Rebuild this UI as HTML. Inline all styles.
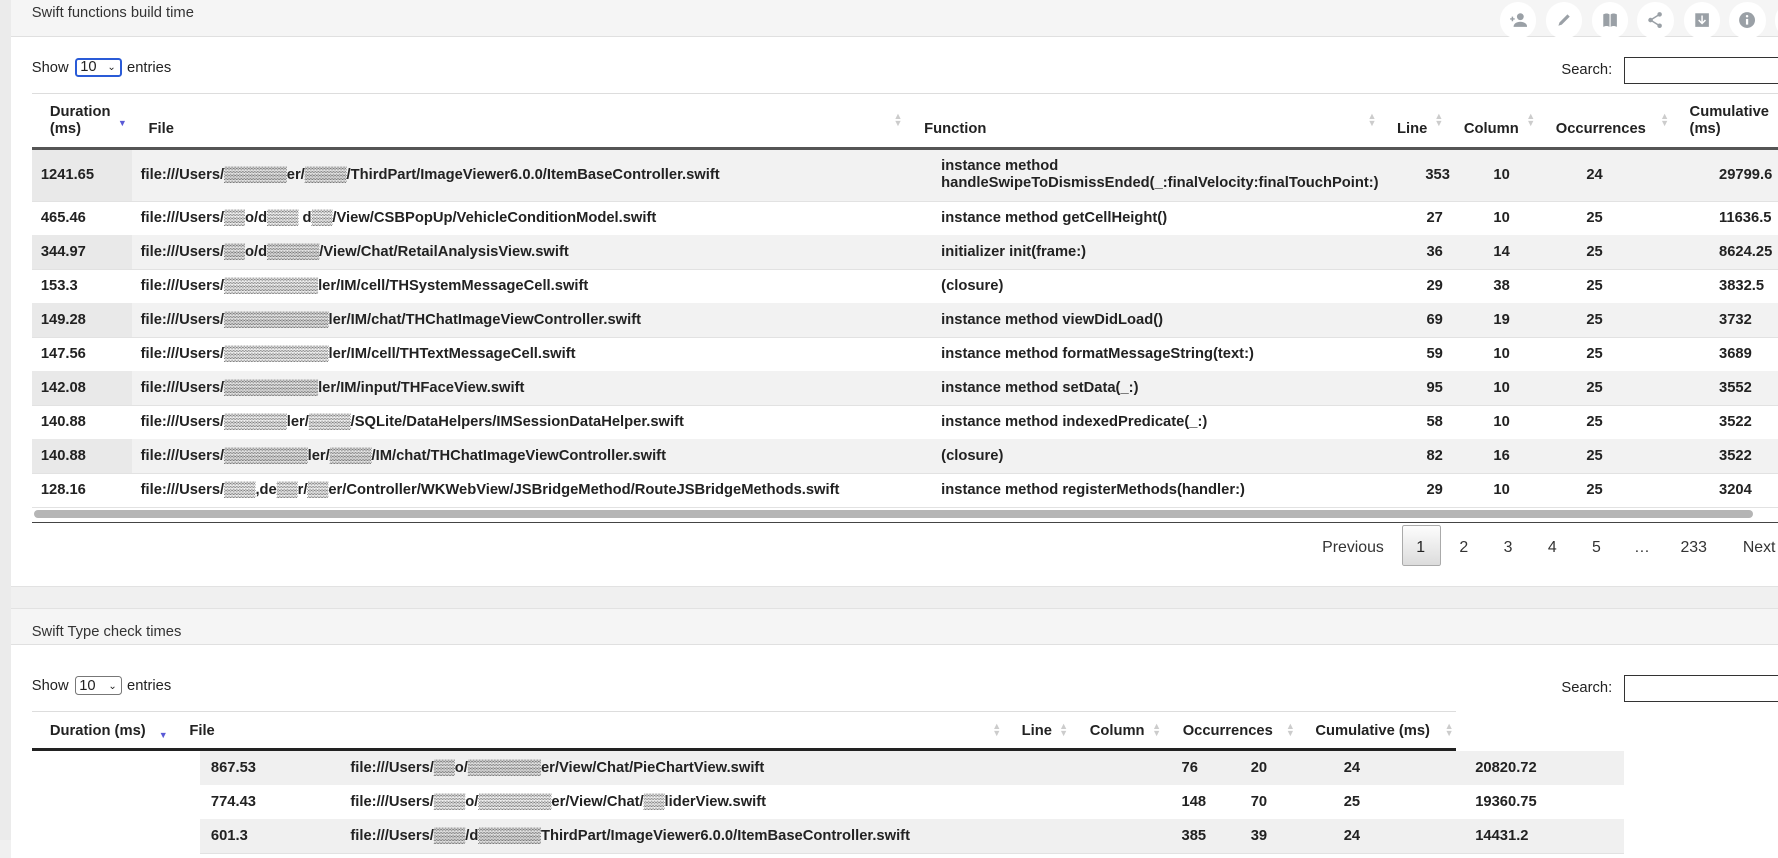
<!DOCTYPE html>
<html><head><meta charset="utf-8"><style>
html,body{margin:0;padding:0;}
body{width:1568px;height:741px;overflow:hidden;zoom:1.13393;background:#f0f0f0;font-family:"Liberation Sans",Arial,sans-serif;font-size:13px;color:#222;position:relative;}
.a{position:absolute;white-space:nowrap;}
.panel{position:absolute;left:10px;width:1580px;background:#fff;}
.hd{position:absolute;left:0;right:0;top:0;background:#f5f5f5;border-bottom:1px solid #e0e0e0;}
.b{font-weight:bold;}
.row{position:absolute;left:28px;width:1560px;height:30px;border-bottom:1px solid #e2e2e2;}
.row.g{background:#f2f2f2;}
.row.g .sc{background:#e9e9e9;}
.sc{position:absolute;left:0;top:0;bottom:0;width:88px;}
.row span{position:absolute;top:8px;font-weight:bold;white-space:nowrap;}
.sel{position:absolute;height:17px;border:1px solid #777;border-radius:3px;font-size:13px;line-height:17px;padding-left:3px;box-sizing:border-box;}
.ic{position:absolute;top:2px;width:32px;height:32px;border-radius:50%;background:#fff;}
.ic svg{position:absolute;left:8px;top:8px;}
.arr{position:absolute;width:6px;color:#ccc;font-size:7px;line-height:6px;}
.r2{position:absolute;left:176px;width:1256px;height:30px;border-bottom:1px solid #e2e2e2;}
.r2 span{position:absolute;top:8px;font-weight:bold;}
</style></head><body>
<div class="a" style="left:0;top:0;width:10px;height:741px;background:#ebebeb"></div>

<!-- panel 1 -->
<div class="panel" style="top:0;height:517px;border-bottom:1px solid #e2e2e2">
 <div class="hd" style="height:32px"></div>
 <div class="a" style="left:18px;top:4px;font-size:13px;color:#333">Swift functions build time</div>
</div>
<div class="ic" style="left:1323px"><svg width="16" height="16" viewBox="0 0 16 16"><circle cx="10" cy="5" r="3" fill="#9aa0a6"/><path d="M4 14c0-3 3-4.5 6-4.5s6 1.5 6 4.5z" fill="#9aa0a6"/><path d="M1 7h4M3 5v4" stroke="#9aa0a6" stroke-width="1.3"/></svg></div>
<div class="ic" style="left:1363px"><svg width="16" height="16" viewBox="0 0 16 16"><path d="M3 13l1-3 7-7 2 2-7 7z" fill="#9aa0a6"/></svg></div>
<div class="ic" style="left:1404px"><svg width="16" height="16" viewBox="0 0 16 16"><path d="M2 3c2-1 4-1 5.5 0v11C6 13 4 13 2 14zM14 3c-2-1-4-1-5.5 0v11c1.5-1 3.5-1 5.5 0z" fill="#9aa0a6"/></svg></div>
<div class="ic" style="left:1444px"><svg width="16" height="16" viewBox="0 0 16 16"><circle cx="12" cy="3" r="2" fill="#9aa0a6"/><circle cx="4" cy="8" r="2" fill="#9aa0a6"/><circle cx="12" cy="13" r="2" fill="#9aa0a6"/><path d="M12 3L4 8l8 5" stroke="#9aa0a6" stroke-width="1.3" fill="none"/></svg></div>
<div class="ic" style="left:1485px"><svg width="16" height="16" viewBox="0 0 16 16"><rect x="2" y="2" width="12" height="12" fill="#9aa0a6"/><path d="M8 4v6M5 8l3 3 3-3" stroke="#fff" stroke-width="1.3" fill="none"/></svg></div>
<div class="ic" style="left:1525px"><svg width="16" height="16" viewBox="0 0 16 16"><circle cx="8" cy="8" r="7" fill="#9aa0a6"/><rect x="7" y="7" width="2" height="5" fill="#fff"/><circle cx="8" cy="4.6" r="1.1" fill="#fff"/></svg></div>
<div class="ic" style="left:1565px"></div>

<div class="a" style="left:28px;top:53px">Show</div>
<div class="sel" style="left:66px;top:51px;width:42px;border:2px solid #2a5bd7;line-height:14px">10 <span style="position:absolute;right:4px;font-size:9px">&#8964;</span></div>
<div class="a" style="left:112px;top:53px">entries</div>
<div class="a" style="left:1377px;top:55px">Search:</div>
<div class="a" style="left:1432px;top:50px;width:150px;height:24px;border:1px solid #333;box-sizing:border-box"></div>

<div class="a" style="left:28px;top:82px;width:1560px;height:1px;background:#ddd"></div>
<div class="a b" style="left:44px;top:92px;line-height:15px">Duration<br>(ms)</div>
<div class="a" style="left:104px;top:104px;color:#5a5ad6;font-size:8px">&#9660;</div>
<div class="a b" style="left:131px;top:107px">File</div>
<div class="a b" style="left:815px;top:107px">Function</div>
<div class="a b" style="left:1232px;top:107px">Line</div>
<div class="a b" style="left:1291px;top:107px">Column</div>
<div class="a b" style="left:1372px;top:107px">Occurrences</div>
<div class="a b" style="left:1490px;top:92px;line-height:15px">Cumulative<br>(ms)</div>
<div class="a" style="left:788px;top:100px;color:#ccc;font-size:8px;line-height:6px">&#9650;<br>&#9660;</div>
<div class="a" style="left:1206px;top:100px;color:#ccc;font-size:8px;line-height:6px">&#9650;<br>&#9660;</div>
<div class="a" style="left:1265px;top:100px;color:#ccc;font-size:8px;line-height:6px">&#9650;<br>&#9660;</div>
<div class="a" style="left:1346px;top:100px;color:#ccc;font-size:8px;line-height:6px">&#9650;<br>&#9660;</div>
<div class="a" style="left:1464px;top:100px;color:#ccc;font-size:8px;line-height:6px">&#9650;<br>&#9660;</div>
<div class="a" style="left:28px;top:130px;width:1560px;height:2px;background:#555"></div>

<div class="row g" style="top:132px;height:45px"><div class="sc"></div>
<span style="left:8px;top:15px">1241.65</span><span style="left:96px;top:15px">file:///Users/▒▒▒▒▒▒er/▒▒▒▒/ThirdPart/ImageViewer6.0.0/ItemBaseController.swift</span>
<span style="left:802px;top:7px;line-height:15px">instance method<br>handleSwipeToDismissEnded(_:finalVelocity:finalTouchPoint:)</span><span style="left:1229px;top:15px">353</span><span style="left:1289px;top:15px">10</span><span style="left:1371px;top:15px">24</span><span style="left:1488px;top:15px">29799.6</span></div>
<div class="row" style="top:177px"><div class="sc"></div><span style="left:8px">465.46</span><span style="left:96px">file:///Users/▒▒o/d▒▒▒ d▒▒/View/CSBPopUp/VehicleConditionModel.swift</span><span style="left:802px">instance method getCellHeight()</span><span style="left:1230px">27</span><span style="left:1289px">10</span><span style="left:1371px">25</span><span style="left:1488px">11636.5</span></div>
<div class="row g" style="top:207px"><div class="sc"></div><span style="left:8px">344.97</span><span style="left:96px">file:///Users/▒▒o/d▒▒▒▒▒/View/Chat/RetailAnalysisView.swift</span><span style="left:802px">initializer init(frame:)</span><span style="left:1230px">36</span><span style="left:1289px">14</span><span style="left:1371px">25</span><span style="left:1488px">8624.25</span></div>
<div class="row" style="top:237px"><div class="sc"></div><span style="left:8px">153.3</span><span style="left:96px">file:///Users/▒▒▒▒▒▒▒▒▒ler/IM/cell/THSystemMessageCell.swift</span><span style="left:802px">(closure)</span><span style="left:1230px">29</span><span style="left:1289px">38</span><span style="left:1371px">25</span><span style="left:1488px">3832.5</span></div>
<div class="row g" style="top:267px"><div class="sc"></div><span style="left:8px">149.28</span><span style="left:96px">file:///Users/▒▒▒▒▒▒▒▒▒▒ler/IM/chat/THChatImageViewController.swift</span><span style="left:802px">instance method viewDidLoad()</span><span style="left:1230px">69</span><span style="left:1289px">19</span><span style="left:1371px">25</span><span style="left:1488px">3732</span></div>
<div class="row" style="top:297px"><div class="sc"></div><span style="left:8px">147.56</span><span style="left:96px">file:///Users/▒▒▒▒▒▒▒▒▒▒ler/IM/cell/THTextMessageCell.swift</span><span style="left:802px">instance method formatMessageString(text:)</span><span style="left:1230px">59</span><span style="left:1289px">10</span><span style="left:1371px">25</span><span style="left:1488px">3689</span></div>
<div class="row g" style="top:327px"><div class="sc"></div><span style="left:8px">142.08</span><span style="left:96px">file:///Users/▒▒▒▒▒▒▒▒▒ler/IM/input/THFaceView.swift</span><span style="left:802px">instance method setData(_:)</span><span style="left:1230px">95</span><span style="left:1289px">10</span><span style="left:1371px">25</span><span style="left:1488px">3552</span></div>
<div class="row" style="top:357px"><div class="sc"></div><span style="left:8px">140.88</span><span style="left:96px">file:///Users/▒▒▒▒▒▒ler/▒▒▒▒/SQLite/DataHelpers/IMSessionDataHelper.swift</span><span style="left:802px">instance method indexedPredicate(_:)</span><span style="left:1230px">58</span><span style="left:1289px">10</span><span style="left:1371px">25</span><span style="left:1488px">3522</span></div>
<div class="row g" style="top:387px"><div class="sc"></div><span style="left:8px">140.88</span><span style="left:96px">file:///Users/▒▒▒▒▒▒▒▒ler/▒▒▒▒/IM/chat/THChatImageViewController.swift</span><span style="left:802px">(closure)</span><span style="left:1230px">82</span><span style="left:1289px">16</span><span style="left:1371px">25</span><span style="left:1488px">3522</span></div>
<div class="row" style="top:417px"><div class="sc"></div><span style="left:8px">128.16</span><span style="left:96px">file:///Users/▒▒▒,de▒▒r/▒▒er/Controller/WKWebView/JSBridgeMethod/RouteJSBridgeMethods.swift</span><span style="left:802px">instance method registerMethods(handler:)</span><span style="left:1230px">29</span><span style="left:1289px">10</span><span style="left:1371px">25</span><span style="left:1488px">3204</span></div>

<div class="a" style="left:30px;top:450px;width:1516px;height:7px;border-radius:4px;background:#b5b5b5"></div>
<div class="a" style="left:28px;top:460px;width:1560px;height:1px;background:#444"></div>

<div class="a" style="left:1166px;top:475px;font-size:14px;color:#333">Previous</div>
<div class="a" style="left:1236px;top:463px;width:35px;height:36px;box-sizing:border-box;border:1px solid #aaa;border-radius:2px;background:linear-gradient(#fdfdfd,#dcdcdc)"></div>
<div class="a" style="left:1249px;top:475px;font-size:14px">1</div>
<div class="a" style="left:1287px;top:475px;font-size:14px;color:#333">2</div>
<div class="a" style="left:1326px;top:475px;font-size:14px;color:#333">3</div>
<div class="a" style="left:1365px;top:475px;font-size:14px;color:#333">4</div>
<div class="a" style="left:1404px;top:475px;font-size:14px;color:#333">5</div>
<div class="a" style="left:1441px;top:475px;font-size:14px;color:#333">…</div>
<div class="a" style="left:1482px;top:475px;font-size:14px;color:#333">233</div>
<div class="a" style="left:1537px;top:475px;font-size:14px;color:#333">Next</div>

<!-- panel 2 -->
<div class="panel" style="top:536px;height:220px;border-top:1px solid #e2e2e2">
 <div class="hd" style="height:31px"></div>
 <div class="a" style="left:18px;top:13px;color:#333">Swift Type check times</div>
</div>
<div class="a" style="left:28px;top:598px">Show</div>
<div class="sel" style="left:66px;top:596px;width:42px">10 <span style="position:absolute;right:4px;font-size:9px">&#8964;</span></div>
<div class="a" style="left:112px;top:598px">entries</div>
<div class="a" style="left:1377px;top:600px">Search:</div>
<div class="a" style="left:1432px;top:595px;width:150px;height:24px;border:1px solid #333;box-sizing:border-box"></div>

<div class="a" style="left:28px;top:627px;width:1256px;height:1px;background:#ddd"></div>
<div class="a b" style="left:44px;top:638px">Duration (ms)</div>
<div class="a" style="left:140px;top:644px;color:#5a5ad6;font-size:8px">&#9660;</div>
<div class="a b" style="left:167px;top:638px">File</div>
<div class="a" style="left:875px;top:638px;color:#ccc;font-size:8px;line-height:6px">&#9650;<br>&#9660;</div>
<div class="a b" style="left:901px;top:638px">Line</div>
<div class="a" style="left:934px;top:638px;color:#ccc;font-size:8px;line-height:6px">&#9650;<br>&#9660;</div>
<div class="a b" style="left:961px;top:638px">Column</div>
<div class="a" style="left:1016px;top:638px;color:#ccc;font-size:8px;line-height:6px">&#9650;<br>&#9660;</div>
<div class="a b" style="left:1043px;top:638px">Occurrences</div>
<div class="a" style="left:1134px;top:638px;color:#ccc;font-size:8px;line-height:6px">&#9650;<br>&#9660;</div>
<div class="a b" style="left:1160px;top:638px">Cumulative (ms)</div>
<div class="a" style="left:1274px;top:638px;color:#ccc;font-size:8px;line-height:6px">&#9650;<br>&#9660;</div>
<div class="a" style="left:28px;top:660px;width:1256px;height:2px;background:#222"></div>

<div class="r2" style="top:662px;background:#f0f0f0"><span style="left:10px">867.53</span><span style="left:133px">file:///Users/▒▒o/▒▒▒▒▒▒▒er/View/Chat/PieChartView.swift</span><span style="left:866px">76</span><span style="left:927px">20</span><span style="left:1009px">24</span><span style="left:1125px">20820.72</span></div>
<div class="r2" style="top:692px;background:#fff"><span style="left:10px">774.43</span><span style="left:133px">file:///Users/▒▒▒o/▒▒▒▒▒▒▒er/View/Chat/▒▒liderView.swift</span><span style="left:866px">148</span><span style="left:927px">70</span><span style="left:1009px">25</span><span style="left:1125px">19360.75</span></div>
<div class="r2" style="top:722px;background:#f0f0f0"><span style="left:10px">601.3</span><span style="left:133px">file:///Users/▒▒▒/d▒▒▒▒▒▒ThirdPart/ImageViewer6.0.0/ItemBaseController.swift</span><span style="left:866px">385</span><span style="left:927px">39</span><span style="left:1009px">24</span><span style="left:1125px">14431.2</span></div>
</body></html>
